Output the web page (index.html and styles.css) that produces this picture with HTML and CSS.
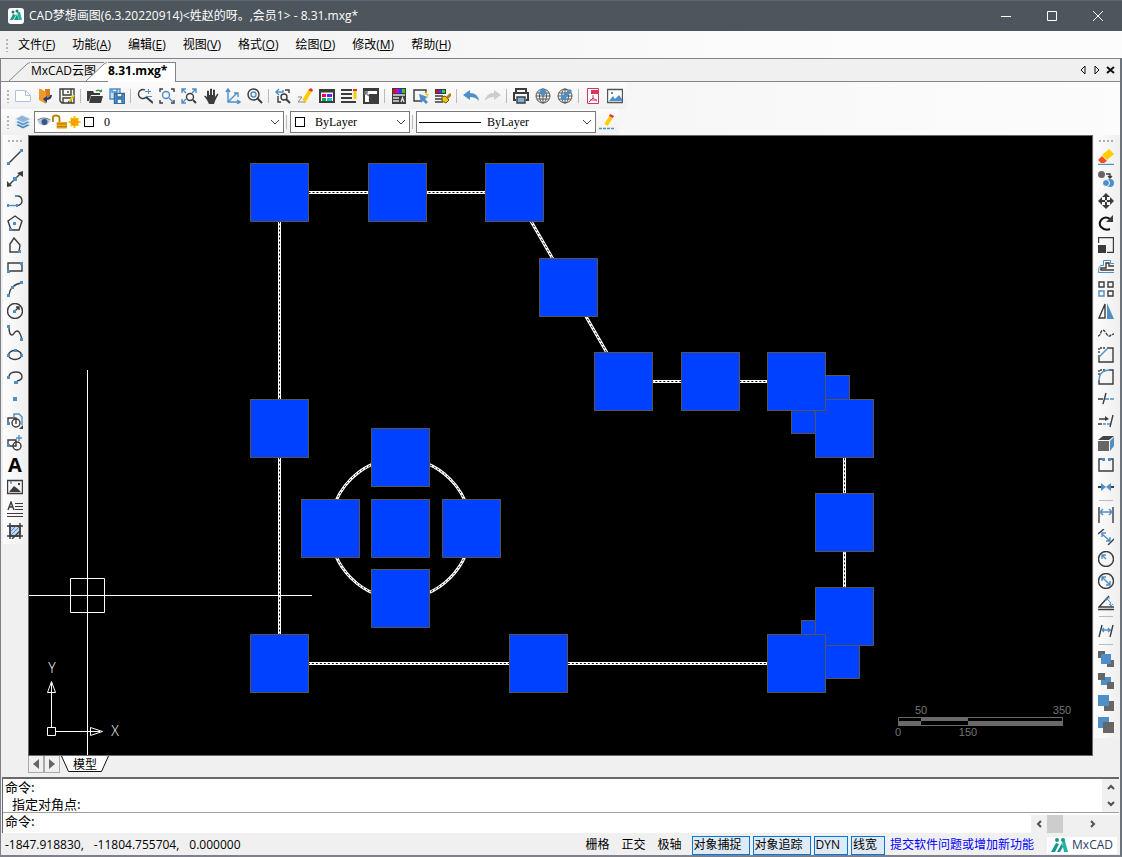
FILE: index.html
```html
<!DOCTYPE html>
<html lang="zh-CN">
<head>
<meta charset="UTF-8">
<meta name="viewport" content="width=device-width, initial-scale=1.0">
<title>CAD梦想画图</title>
<link rel="stylesheet" href="styles.css">
</head>
<body>
  <header class="titlebar">
    <svg class="app-logo" viewBox="0 0 16 16"><rect width="16" height="16" rx="3" fill="#fff"/><path d="M2 12 5 6l3 1-3 5zM6 12l3-6 2 6z" fill="#179a8c"/><path d="M9 4h3l2 8h-3z" fill="#1fb5a5"/><circle cx="5" cy="4" r="1.500" fill="#37706c"/><circle cx="9" cy="3" r="1.500" fill="#37706c"/></svg>
    <h1>CAD梦想画图(6.3.20220914)&lt;姓赵的呀。,会员1&gt; - 8.31.mxg*</h1>
    <div class="window-buttons">
      <button aria-label="最小化"><svg viewBox="0 0 12 12"><path d="M1 6.500h10"/></svg></button>
      <button aria-label="最大化"><svg viewBox="0 0 12 12"><path d="M1.500 1.500h9v9h-9z"/></svg></button>
      <button aria-label="关闭"><svg viewBox="0 0 12 12"><path d="M1 1l10 10M11 1 1 11"/></svg></button>
    </div>
  </header>

  <nav class="menubar">
    <span class="grip"></span>
    <button>文件(<u>F</u>)</button>
    <button>功能(<u>A</u>)</button>
    <button>编辑(<u>E</u>)</button>
    <button>视图(<u>V</u>)</button>
    <button>格式(<u>O</u>)</button>
    <button>绘图(<u>D</u>)</button>
    <button>修改(<u>M</u>)</button>
    <button>帮助(<u>H</u>)</button>
  </nav>

  <div class="frame">
    <div class="doc-tabs">
      <button class="doc-tab"><svg viewBox="0 0 22 19"><path d="M0 19 18 2q2-1.500 4-1.500V19z"/></svg><span>MxCAD云图</span></button>
      <button class="doc-tab active"><svg viewBox="0 0 22 19"><path d="M0 19 18 2q2-1.500 4-1.500V19z"/></svg><span>8.31.mxg*</span></button>
      <div class="tab-nav">
        <button aria-label="上一个"><svg viewBox="0 0 10 10"><path d="M7 1v8L3 5z"/></svg></button>
        <button aria-label="下一个"><svg viewBox="0 0 10 10"><path d="M3 1v8l4-4z"/></svg></button>
        <button aria-label="关闭文档"><svg viewBox="0 0 10 10"><path class="thick" d="M1 2l7 6M8 2 1 8"/></svg></button>
      </div>
    </div>

    <div class="toolbars">
      <div class="toolbar main-bar">
        <span class="grip"></span>
        <button class="tool" aria-label="新建"><svg viewBox="0 0 16 16"><path d="M.5 2.500h10l5 5v6H.5z" fill="#fff" stroke="#a9c6e0" stroke-width="1"/><path d="M10.500 2.500v5h5" stroke="#a9c6e0" stroke-width="1"/></svg></button>
        <button class="tool" aria-label="打开云图"><svg viewBox="0 0 16 16"><path d="M8 1h5v9l-5 3z" fill="#d97b16" stroke="none"/><path d="M2 1h2l5 3v12l-7-4z" fill="#f0982c" stroke="none"/><path d="M14 7q0 4-5 4" stroke="#1b3f7a" stroke-width="2"/><path d="M6 11l4-3v7z" fill="#1b3f7a" stroke="none"/></svg></button>
        <button class="tool" aria-label="保存"><svg viewBox="0 0 16 16"><path d="M1 1h14v14H3l-2-2zM4 1v6h8V1M4 15v-5h8v5M9 3v2"/><path d="M15 7l-5 7" stroke="#f5c400" stroke-width="2"/><path class="kf" d="M9 13l2 1-2 2z"/></svg></button>
        <span class="sep"></span>
        <button class="tool" aria-label="打开"><svg viewBox="0 0 16 16"><path class="kf" d="M0 3h6l1 2h6v2H4l-2 6H0zM4 8h12l-2 7H2z"/><path d="M9 3q3-2 5 1" stroke="#3a8b52"/><path d="M12 4h3V1z" fill="#3a8b52" stroke="none"/></svg></button>
        <button class="tool" aria-label="全部保存"><svg viewBox="0 0 16 16"><path class="bl" d="M1 1h10v10H1zM3 1v3h5V1" fill="#c9dff2"/><path d="M5.500 5.500h10v10h-10z" fill="#5b98ce" stroke="#2f6da4"/><path d="M8 6v3h5V6M8 15v-4h5v4" fill="#fff" stroke="#2f6da4"/></svg></button>
        <span class="sep"></span>
        <button class="tool" aria-label="实时缩放"><svg viewBox="0 0 16 16"><path d="M8 2a4.500 4.500 0 1 0 2 6"/><path class="heavy" d="M9 9l7 6"/><path class="bl thin" d="M8 3.500h6M11.500 1v5M9 8.500h6"/></svg></button>
        <button class="tool" aria-label="窗口缩放"><svg viewBox="0 0 16 16"><path d="M1 4V1h3M12 1h3v3M1 12v3h3M12 15h3v-3"/><circle class="bl" cx="7" cy="7" r="3.500"/><path class="bl" d="M10 10l4 4"/></svg></button>
        <button class="tool" aria-label="范围缩放"><svg viewBox="0 0 16 16"><path class="bl" d="M1 5V1h4M1 1l4 4M11 1h4v4M15 1l-4 4M1 11v4h4M1 15l4-4"/><circle cx="9" cy="9" r="3.500"/><path class="heavy" d="M12 12l3 3"/></svg></button>
        <button class="tool" aria-label="平移"><svg viewBox="0 0 16 16"><path class="kf" d="M4 9V3q1-1 2 0v4h1V1q1-1 2 0v6h1V2q1-1 2 0v7l2-3q2-1 1 1l-3 6-1 3H6l-2-4-3-4q1-1 3 1z"/></svg></button>
        <button class="tool" aria-label="坐标系"><svg viewBox="0 0 16 16"><path class="bl" d="M3 2v12h11M3 14 12 5M1 4l2-3 2 3M12 12l3 2-3 2M9 5h4v4"/></svg></button>
        <button class="tool" aria-label="缩放"><svg viewBox="0 0 16 16"><circle cx="6.500" cy="6.500" r="5.500"/><circle class="bl" cx="6.500" cy="6.500" r="2.500"/><path class="heavy" d="M10 10l5 5"/></svg></button>
        <span class="sep"></span>
        <button class="tool" aria-label="上一视图"><svg viewBox="0 0 16 16"><path class="bl" d="M4 1 1 4l3 3M1 4h7V2"/><path d="M10 2h4v3M3 8v6h3"/><circle cx="9" cy="9" r="3"/><path class="heavy" d="M11 11l4 4"/></svg></button>
        <button class="tool" aria-label="编辑"><svg viewBox="0 0 16 16"><path d="M1 9h4l-4 5h8" stroke="#888" stroke-width="1"/><path d="M13 3 7 13" stroke="#fc0" stroke-width="4"/><path d="M14 0l2 2-1 2-4-2z" fill="#d33" stroke="none"/></svg></button>
        <button class="tool" aria-label="特性"><svg viewBox="0 0 16 16"><path d="M1 2h14v12H1z" fill="#fff" stroke-width="2"/><path d="M1 3h14" stroke-width="3"/><path d="M3 6h4v3H3z" fill="#e06" stroke="none"/><path d="M8 6h5v3H8z" fill="#62f" stroke="none"/><path d="M3 10h4v3H3z" fill="#1a4" stroke="none"/><path d="M8 10h5v3H8z" fill="#2bb" stroke="none"/></svg></button>
        <button class="tool" aria-label="图层列表"><svg viewBox="0 0 16 16"><path d="M0 2h11M0 6h11M0 10h11M0 14h15" stroke-width="2"/><path d="M14 2v9" stroke="#fc0" stroke-width="3"/><path d="M12 1h4v2h-4z" fill="#d33" stroke="none"/></svg></button>
        <button class="tool" aria-label="图块"><svg viewBox="0 0 16 16"><path d="M1 1h14v14H1z" fill="#fff" stroke-width="2"/><path class="kf" d="M6 6h9v9H6zM1 1h14v2H1z"/><path d="M2 4l4 4M2 7V4h3" stroke="#777"/></svg></button>
        <span class="sep"></span>
        <button class="tool" aria-label="颜色"><svg viewBox="0 0 16 16"><path class="kf" d="M1 0h14v16H1z"/><path d="M2 1h3v4H2z" fill="#e02" stroke="none"/><path d="M5 1h3v4H5z" fill="#b0f" stroke="none"/><path d="M8 1h3v4H8z" fill="#24f" stroke="none"/><path d="M11 1h3v4h-3z" fill="#3c2" stroke="none"/><path d="M2 7h12M2 10h6M2 13h6M10 14l1.500-4 1.500 4" stroke="#ddd"/></svg></button>
        <button class="tool" aria-label="快速选择"><svg viewBox="0 0 16 16"><path d="M8 13H1V2h12v3"/><path class="bf" d="M6 6l9 3-3 2 3 3-2 2-3-3-2 2z"/><path d="M14 3l-2 4h2l-1 4 3-5h-2z" fill="#fc0" stroke="none"/></svg></button>
        <button class="tool" aria-label="格式刷"><svg viewBox="0 0 16 16"><path class="kf" d="M0 1h11v5H0z"/><path d="M1 2h3v3H1z" fill="#e02" stroke="none"/><path d="M4 2h3v3H4z" fill="#24f" stroke="none"/><path d="M7 2h3v3H7z" fill="#3c2" stroke="none"/><path d="M0 8h8M0 11h7M0 14h8"/><path d="M7 9l3-1 4 4-3 3-4-2z" fill="#f0c419" stroke="#6b5400" stroke-width="1"/><path d="M12 10l4-4" stroke="#a8830b" stroke-width="3"/></svg></button>
        <span class="sep"></span>
        <button class="tool" aria-label="撤销"><svg viewBox="0 0 16 16"><path class="bf" d="M0 7l7-5v3q8 0 9 8-3-4-9-4v3z"/></svg></button>
        <button class="tool" aria-label="重做"><svg viewBox="0 0 16 16"><path d="M16 7 9 2v3Q1 5 0 13q3-4 9-4v3z" fill="#ccc" stroke="none"/></svg></button>
        <span class="sep"></span>
        <button class="tool" aria-label="打印"><svg viewBox="0 0 16 16"><path d="M3 5V1h10v4M3 12H1V5h14v7h-2" stroke-width="2"/><path d="M4 9h8v6H4z" fill="#7fb0dc"/></svg></button>
        <button class="tool" aria-label="上传网络"><svg class="globe" viewBox="0 0 16 16"><circle cx="8" cy="8" r="7"/><path d="M1 8h14M8 1v14M2 5h12M2 11h12"/><ellipse cx="8" cy="8" rx="3.500" ry="7"/><path class="bf" d="M3 6l5-6 5 6h-3v1H6V6z"/></svg></button>
        <button class="tool" aria-label="下载网络"><svg class="globe" viewBox="0 0 16 16"><circle cx="8" cy="8" r="7"/><path d="M1 8h14M8 1v14M2 5h12M2 11h12"/><ellipse cx="8" cy="8" rx="3.500" ry="7"/><path class="bf" d="M4 12V5l2 2 7-6 2 2-6 7 2 2z"/></svg></button>
        <span class="sep"></span>
        <button class="tool" aria-label="输出PDF"><svg viewBox="0 0 16 16"><path d="M2.500.5h11v15h-11z" fill="#fff" stroke="#d8365d" stroke-width="1"/><path d="M6 2h8v4H6z" fill="#d8365d" stroke="none"/><path d="M8 7v3l-4 4M8 10l4 3M5 12h7" stroke="#d8365d" stroke-width="1"/></svg></button>
        <button class="tool" aria-label="输出图片"><svg viewBox="0 0 16 16"><path d="M.5 1.500h15v13H.5z" fill="#fff" stroke="#555"/><path class="bf" d="M2 13l4-5 2 3 4-4 3 4v2zM4 4h2v2H4z"/></svg></button>
      </div>

      <div class="toolbar">
        <span class="grip"></span>
        <button class="tool" aria-label="图层"><svg viewBox="0 0 16 16"><path d="M0 11l7-3 9 3-8 4z" fill="#4f86b8" stroke="#e8f0f8" stroke-width="1"/><path d="M0 8l7-3 9 3-8 4z" fill="#5f94c4" stroke="#e8f0f8" stroke-width="1"/><path d="M0 5l7-4 9 4-8 4z" fill="#8fb6d9" stroke="#e8f0f8" stroke-width="1"/></svg></button>
        <div class="combo layer-combo">
          <select aria-label="当前图层"><option>0</option></select>
          <span class="combo-art">
            <svg viewBox="0 0 14 16"><path d="M0 7q6-6 13 0-4 6-9 4Q1 10 0 7z" fill="#b9c9da" stroke="none"/><circle cx="7" cy="8" r="3" fill="#355a85" stroke="none"/><path d="M0 6q6-4 13 0" stroke="#6b7786" stroke-width="1"/></svg>
            <svg viewBox="0 0 16 16"><path d="M1 8V3q0-2 3-2 4 0 4 3v4" stroke="#b8860b" stroke-width="2"/><path d="M5 8h11v7H5z" fill="#e8ac1c" stroke="none"/><path d="M5 10h11M5 13h11" stroke="#a87408" stroke-width="1"/></svg>
            <svg viewBox="0 0 14 16"><path d="M7 2v12M1 8h12M3 4l8 8M11 4l-8 8" stroke="#ffc800" stroke-width="2"/><circle cx="7" cy="8" r="4" fill="#ffa000" stroke="none"/></svg>
            <i class="swatch"></i>
          </span>
          <svg class="chevron" viewBox="0 0 10 6"><path d="M1 1l4 4 4-4"/></svg>
        </div>
        <span class="sep"></span>
        <div class="combo color-combo">
          <select aria-label="颜色"><option>ByLayer</option></select>
          <span class="combo-art"><i class="swatch"></i></span>
          <svg class="chevron" viewBox="0 0 10 6"><path d="M1 1l4 4 4-4"/></svg>
        </div>
        <span class="sep"></span>
        <div class="combo line-combo">
          <select aria-label="线型"><option>ByLayer</option></select>
          <span class="combo-art"><i class="line-sample"></i></span>
          <svg class="chevron" viewBox="0 0 10 6"><path d="M1 1l4 4 4-4"/></svg>
        </div>
        <button class="tool" aria-label="线型管理"><svg viewBox="0 0 16 16"><path class="bl" d="M0 14.500h16" stroke-dasharray="3 1"/><path d="M12 3 7 11" stroke="#fc0" stroke-width="4"/><path d="M11 0l4 2-1 2-4-2z" fill="#d33" stroke="none"/></svg></button>
      </div>
    </div>

    <main class="workspace">
      <div class="side left">
        <span class="grip flat"></span>
        <button class="tool" aria-label="直线"><svg viewBox="0 0 16 16"><path d="M2 14 14 2"/><path class="bf" d="M0 13h3v3H0zM13 0h3v3h-3z"/></svg></button>
        <button class="tool" aria-label="构造线"><svg viewBox="0 0 16 16"><path d="M2 14 14 2"/><path class="kf" d="M16 0v6l-6-4zM0 16v-6l5 5z"/><path class="bf" d="M6 6h4v4H6z"/></svg></button>
        <button class="tool" aria-label="多段线"><svg viewBox="0 0 16 16"><path d="M10 3q5 0 5 5 0 4-5 4.500"/><path class="bl" d="M0 12.500h10"/><path class="bf" d="M8 2h3v2H8zM0 11h2v3H0zM9 11h2v3H9z"/></svg></button>
        <button class="tool" aria-label="正多边形"><svg viewBox="0 0 16 16"><path d="M8 1l7 5-3 9H4L1 6z"/><path class="bf" d="M6 7h3v3H6zM2 13h3v3H2z"/></svg></button>
        <button class="tool" aria-label="多边形"><svg viewBox="0 0 16 16"><path d="M7 1l6 7-1 7H3V7z"/><path class="bf" d="M11 13h3v3h-3z"/></svg></button>
        <button class="tool" aria-label="矩形"><svg viewBox="0 0 16 16"><path d="M1 4h14v8H1z"/><path class="bf" d="M13 3h3v3h-3zM0 11h3v3H0z"/></svg></button>
        <button class="tool" aria-label="圆弧"><svg viewBox="0 0 16 16"><path d="M2 14Q3 4 14 2"/><path class="bf" d="M0 13h3v3H0zM4 5h3v3H4zM13 0h3v3h-3z"/></svg></button>
        <button class="tool" aria-label="圆"><svg viewBox="0 0 16 16"><circle cx="8" cy="8" r="7.500"/><path d="M8 8l4-4M9 4h3v3"/><path class="bf" d="M6 7h3v3H6z"/></svg></button>
        <button class="tool" aria-label="样条曲线"><svg viewBox="0 0 16 16"><path d="M2 2q0 8 3 8c2 0 2-4 5-4s3 3 5 8"/><path class="bf" d="M0 0h3v3H0zM13 13h3v3h-3z"/></svg></button>
        <button class="tool" aria-label="椭圆"><svg viewBox="0 0 16 16"><ellipse cx="8" cy="8" rx="6.500" ry="4.500"/><path class="bf" d="M0 7h3v3H0zM13 7h3v3h-3zM7 2h3v3H7z"/></svg></button>
        <button class="tool" aria-label="椭圆弧"><svg viewBox="0 0 16 16"><path d="M2 7q1-4 7-4 6 0 6 5 0 3-5 4"/><path class="bf" d="M0 7h3v3H0zM7 12h4v3H7z"/></svg></button>
        <button class="tool" aria-label="点"><svg viewBox="0 0 16 16"><path class="bf" d="M6 6h4v4H6z"/></svg></button>
        <button class="tool" aria-label="插入块"><svg viewBox="0 0 16 16"><path class="bl" d="M7 4V1h5l3 3v8"/><path d="M1 10V5h8v6"/><circle cx="9" cy="10" r="4"/><path class="bf" d="M0 9h3v3H0z"/><path class="kf" d="M16 12v4h-4z"/></svg></button>
        <button class="tool" aria-label="创建块"><svg viewBox="0 0 16 16"><path class="bl" d="M12 0v6M9 3h6"/><path d="M1 10V5h8v6H3"/><circle cx="10" cy="11" r="4"/><path class="bf" d="M0 9h3v3H0z"/></svg></button>
        <button class="tool letter" aria-label="文字">A</button>
        <button class="tool" aria-label="图像"><svg viewBox="0 0 16 16"><path d="M.5 1.500h15v13H.5z"/><path class="kf" d="M2 13l5-6 4 3 3 3zM11 4h2v2h-2z"/><path class="bl" d="M4 2v3"/></svg></button>
        <button class="tool" aria-label="多行文字"><svg viewBox="0 0 16 16"><path d="M1 9l3-8 3 8M2 6h4"/><path class="thin" d="M8 2.500h8M8 5.500h8M8 8.500h8M0 12.500h16M0 15.500h16"/></svg></button>
        <button class="tool" aria-label="图案填充"><svg viewBox="0 0 16 16"><path d="M3 3h10v10H3z" fill="#bcd5ec"/><path class="bl thin" d="M3 9l6-6M3 13 13 3M8 13l5-5"/><path d="M3 0v16M13 0v16M0 3h16M0 13h16M5 16l8-8"/></svg></button>
      </div>

      <div class="view">
        <div class="canvas">
          <svg class="drawing" role="img" aria-label="图形">
            <!-- selected outline and circle -->
            <g class="outline">
              <path d="M250.500 527.500V56.500h235l109 189h173q48 0 48 47v188l-48 47z"/>
              <circle cx="371.500" cy="392.500" r="70"/>
            </g>
            <g class="outline dash">
              <path d="M250.500 527.500V56.500h235l109 189h173q48 0 48 47v188l-48 47z"/>
              <circle cx="371.500" cy="392.500" r="70"/>
            </g>
            <!-- grips -->
            <g class="grips">
              <rect x="221.500" y="27.500" width="58" height="58"/>
              <rect x="339.500" y="27.500" width="58" height="58"/>
              <rect x="456.500" y="27.500" width="58" height="58"/>
              <rect x="510.500" y="122.500" width="58" height="58"/>
              <rect x="565.500" y="216.500" width="58" height="58"/>
              <rect x="652.500" y="216.500" width="58" height="58"/>
              <rect x="762.500" y="239.500" width="58" height="58"/>
              <rect x="786.500" y="263.500" width="58" height="58"/>
              <rect x="738.500" y="216.500" width="58" height="58"/>
              <rect x="786.500" y="357.500" width="58" height="58"/>
              <rect x="772.500" y="484.500" width="58" height="58"/>
              <rect x="786.500" y="451.500" width="58" height="58"/>
              <rect x="738.500" y="498.500" width="58" height="58"/>
              <rect x="480.500" y="498.500" width="58" height="58"/>
              <rect x="221.500" y="498.500" width="58" height="58"/>
              <rect x="221.500" y="263.500" width="58" height="58"/>
              <rect x="342.500" y="292.500" width="58" height="58"/>
              <rect x="272.500" y="363.500" width="58" height="58"/>
              <rect x="342.500" y="363.500" width="58" height="58"/>
              <rect x="413.500" y="363.500" width="58" height="58"/>
              <rect x="342.500" y="433.500" width="58" height="58"/>
            </g>
            <!-- cursor -->
            <path class="cursor" d="M58.500 234v385M0 459.500h283M41.500 442.500h34v34h-34z"/>
          </svg>
          <svg class="ucs" viewBox="0 0 110 100">
            <path d="M18.500 72.500h8v8h-8zM22.500 72V38M27 76.500h35M22.500 26.500l-4 11h8zM22.500 28v9M73.500 76.500l-12-4v8zM62 76.500h9"/>
            <text x="23" y="18">Y</text><text x="86" y="81">X</text>
          </svg>
          <svg class="scale" viewBox="0 0 200 40">
            <path class="edge" d="M14.500 14.500h164v8h-164z"/>
            <path class="fill" d="M14 18h23v5H14zM37 14h47v4H37zM84 18h95v5H84z"/>
            <text x="37" y="11">50</text><text x="178" y="11">350</text>
            <text x="14" y="33">0</text><text x="84" y="33">150</text>
          </svg>
        </div>
        <div class="sheet-tabs">
          <button class="sheet-nav" aria-label="向左"><svg viewBox="0 0 8 10"><path d="M7 0v10L1 5z"/></svg></button>
          <button class="sheet-nav" aria-label="向右"><svg viewBox="0 0 8 10"><path d="M1 0v10l6-5z"/></svg></button>
          <button class="sheet-tab"><svg viewBox="0 0 48 16"><path d="M.5 0l7 15.500h33L47.500 0"/></svg><span>模型</span></button>
        </div>
      </div>

      <div class="side right">
        <span class="grip flat"></span>
        <button class="tool" aria-label="删除"><svg viewBox="0 0 16 16"><path d="M4 6l7-6 5 5-7 6z" fill="#fc0" stroke="none"/><path d="M4 7l5 5-3 2H3l-3-3z" fill="#f4511e" stroke="none"/><path class="bl" d="M0 15.500h16"/></svg></button>
        <button class="tool" aria-label="复制"><svg viewBox="0 0 16 16"><circle cx="3.500" cy="3.500" r="3.500" fill="#666" stroke="none"/><path d="M8 3h4v3M10 5l2 2 2-2"/><circle class="bf" cx="12" cy="12" r="4"/><circle cx="8" cy="12" r="3.500" fill="#4f8fc8" stroke="#fff" stroke-width="1"/></svg></button>
        <button class="tool" aria-label="移动"><svg viewBox="0 0 16 16"><path d="M8 2v12M2 8h12" stroke-width="2"/><path class="kf" d="M8 0l4 4H4zM8 16l4-4H4zM0 8l4-4v8zM16 8l-4-4v8z"/><path class="hole" d="M7 7h2v2H7z"/></svg></button>
        <button class="tool" aria-label="旋转"><svg viewBox="0 0 16 16"><path d="M12 4Q8 1 4 4q-4 4-1 8 4 4 9 2" stroke="#111" stroke-width="2"/><path class="kf" d="M15 0v7H8z"/></svg></button>
        <button class="tool" aria-label="缩放对象"><svg viewBox="0 0 16 16"><path d="M.5 6V.5h15v15H9"/><path class="kf" d="M0 8h8v8H0z"/></svg></button>
        <button class="tool" aria-label="偏移"><svg viewBox="0 0 16 16"><path class="bl thin" d="M16 4.500h-3.500v-3h-7v5h-3q-2 1-2 7h15.500"/><path d="M16 7h-5V4H8v5H3v2h13"/></svg></button>
        <button class="tool" aria-label="阵列"><svg viewBox="0 0 16 16"><path d="M1 1h5v5H1zM10 1h5v5h-5zM10 10h5v5h-5z"/><path class="bl" d="M1 10h5v5H1z"/></svg></button>
        <button class="tool" aria-label="镜像"><svg viewBox="0 0 16 16"><path d="M7 1v14H1z"/><path class="bf" d="M9 0v16h7z"/></svg></button>
        <button class="tool" aria-label="光顺曲线"><svg viewBox="0 0 16 16"><path d="M0 11q2 0 3-4 2-4 5 1 3 5 5 2l3-1" stroke-dasharray="3 1"/></svg></button>
        <button class="tool" aria-label="倒角"><svg viewBox="0 0 16 16"><path d="M9 1h6v14H1V8"/><path d="M1 6V1h6" stroke-dasharray="2 1"/><path class="bl" d="M1 10l9-9"/></svg></button>
        <button class="tool" aria-label="圆角"><svg viewBox="0 0 16 16"><path d="M11 1h4v14H1v-4"/><path d="M1 6V1h6" stroke-dasharray="2 1"/><path class="bl" d="M1 12Q1 1 12 1"/></svg></button>
        <button class="tool" aria-label="修剪"><svg viewBox="0 0 16 16"><path d="M0 8h5M5 13 8 2"/><path class="bl" d="M7 8h9" stroke-dasharray="4 1"/></svg></button>
        <button class="tool" aria-label="延伸"><svg viewBox="0 0 16 16"><path d="M1 6h8M0 11h4M12 14l3-12"/><path class="kf" d="M7 3l4 3-4 2z"/><path class="bl" d="M5 11h7" stroke-dasharray="3 1"/></svg></button>
        <button class="tool" aria-label="长方体"><svg viewBox="0 0 16 16"><path d="M0 5l5-4h11l-5 4z" fill="#444" stroke="none"/><path d="M0 6h11v10H0z" fill="#666" stroke="none"/><path class="bf" d="M12 6l4-4v9l-4 5z"/></svg></button>
        <button class="tool" aria-label="打断"><svg viewBox="0 0 16 16"><path d="M4 2H1v12h14V2h-3"/><path class="bf" d="M4 1h3v3H4zM10 1h3v3h-3z"/></svg></button>
        <button class="tool" aria-label="合并"><svg viewBox="0 0 16 16"><path d="M0 8h4M12 8h4" stroke-width="2"/><path class="bf" d="M3 4l5 4-5 4zM13 4 8 8l5 4z"/></svg></button>
        <span class="sep"></span>
        <button class="tool" aria-label="线性标注"><svg viewBox="0 0 16 16"><path d="M1 0v16M15 0v16"/><path class="bl" d="M3 5h10M5 2 2 5l3 3M11 2l3 3-3 3"/></svg></button>
        <button class="tool" aria-label="对齐标注"><svg viewBox="0 0 16 16"><path d="M0 5l6-5M10 16l6-6"/><path class="bl" d="M4 5l8 7M4 8V4h4M8 12h4V8"/></svg></button>
        <button class="tool" aria-label="半径标注"><svg viewBox="0 0 16 16"><circle cx="8" cy="8" r="7.500"/><path class="bl" d="M4 4l4 4M4 8V4h4"/></svg></button>
        <button class="tool" aria-label="直径标注"><svg viewBox="0 0 16 16"><circle cx="8" cy="8" r="7.500"/><path class="bl" d="M4 4l8 8M4 8V4h4M8 12h4V8"/></svg></button>
        <button class="tool" aria-label="角度标注"><svg viewBox="0 0 16 16"><path d="M11 1 1 12h15M0 14.500h16"/><path class="bl thin" d="M9 4q4 2 4 7M8 6V3h4M11 9l2 2 2-2"/></svg></button>
        <span class="sep"></span>
        <button class="tool" aria-label="编辑标注"><svg viewBox="0 0 16 16"><path d="M1 14 4 2M12 14l3-12"/><path class="bl" d="M4 7h9M6 5 4 7l2 2M10 5l2 2-2 2"/></svg></button>
        <span class="sep"></span>
        <button class="tool" aria-label="前置"><svg viewBox="0 0 16 16"><path class="gf" d="M0 0h7v7H0zM9 9h7v7H9z"/><path class="bf" d="M3 3h10v10H3z"/></svg></button>
        <button class="tool" aria-label="后置"><svg viewBox="0 0 16 16"><path class="bf" d="M3 4h10v8H3z"/><path class="gf" d="M0 0h7v7H0zM9 9h7v7H9z"/></svg></button>
        <button class="tool" aria-label="置于对象之上"><svg viewBox="0 0 16 16"><path class="gf" d="M6 6h10v10H6z"/><path class="bf" d="M0 0h11v11H0z"/></svg></button>
        <button class="tool" aria-label="置于对象之下"><svg viewBox="0 0 16 16"><path class="bf" d="M0 0h11v11H0z"/><path class="gf" d="M5 5h11v11H5z"/></svg></button>
      </div>
    </main>

    <section class="command">
      <div class="history">
        <div class="log"><p>命令:</p><p class="indent">指定对角点:</p></div>
        <div class="vscroll">
          <button aria-label="向上滚动"><svg viewBox="0 0 8 6"><path d="M1 5l3-3 3 3"/></svg></button>
          <button aria-label="向下滚动"><svg viewBox="0 0 8 6"><path d="M1 1l3 3 3-3"/></svg></button>
        </div>
      </div>
      <div class="prompt">
        <label for="cmd">命令:</label>
        <input type="text" id="cmd">
        <div class="hscroll">
          <button aria-label="向左滚动"><svg viewBox="0 0 6 8"><path d="M5 1 2 4l3 3"/></svg></button>
          <span class="thumb"></span>
          <button aria-label="向右滚动"><svg viewBox="0 0 6 8"><path d="M1 1l3 3-3 3"/></svg></button>
        </div>
      </div>
    </section>

    <footer class="status">
      <div class="coords"><span>-1847.918830,</span><span>-11804.755704,</span><span>0.000000</span></div>
      <button class="mode">栅格</button>
      <button class="mode">正交</button>
      <button class="mode">极轴</button>
      <button class="mode on">对象捕捉</button>
      <button class="mode on">对象追踪</button>
      <button class="mode on">DYN</button>
      <button class="mode on">线宽</button>
      <a href="#">提交软件问题或增加新功能</a>
      <div class="brand"><svg viewBox="0 0 18 14"><path d="M0 14 5 5l3 1-4 8zM6 14l5-9 1 4-3 5z" fill="#14988b"/><path d="M11 3h3l3 11h-4z" fill="#1fb5a5"/><circle cx="6" cy="2" r="2" fill="#14988b"/><circle cx="12" cy="2" r="2" fill="#14988b"/></svg><span>MxCAD</span></div>
    </footer>
  </div>
</body>
</html>
```
FILE: styles.css
```css
* {
  box-sizing: border-box;
}
body {
  margin: 0;
  min-height: 100vh;
  display: flex;
  flex-direction: column;
  background: #f0f0f0;
  color: #000;
  font: 12px/16px "Open Sans", "Noto Sans CJK SC", sans-serif;
}
button {
  font: inherit;
  color: inherit;
  background: none;
  border: none;
  padding: 0;
  margin: 0;
}
svg {
  display: block;
  flex: none;
}

/* title bar */
.titlebar {
  height: 31px;
  display: flex;
  align-items: center;
  background: #4d565c;
  border-top: 1px solid #5d666c;
  color: #fff;
  padding: 0 1px 0 8px;
}
.titlebar h1 {
  margin: 0 0 0 5px;
  flex: 1;
  font-size: 12px;
  font-weight: normal;
}
.app-logo {
  width: 16px;
  height: 16px;
}
.window-buttons {
  display: flex;
}
.window-buttons button {
  width: 46px;
  height: 30px;
  display: flex;
  align-items: center;
  justify-content: center;
}
.window-buttons svg {
  width: 12px;
  height: 12px;
  fill: none;
  stroke: #fff;
}

/* menu */
.menubar {
  height: 27px;
  display: flex;
  align-items: center;
  background: linear-gradient(90deg, #f0f0f0, #fcfcfc 75%);
}
.menubar button {
  padding: 0 9px 0 8px;
}
.grip {
  width: 10px;
  height: 14px;
  background: radial-gradient(circle, #b5b5b5 1px, transparent 1px) 5px 0 / 4px 4px repeat-y;
}
.grip.flat {
  width: 16px;
  height: 4px;
  margin: 4px 0 3px;
  background: radial-gradient(circle, #b0b0b0 1px, transparent 1px) 0 0 / 4px 4px repeat-x;
}

.frame {
  flex: 1;
  display: flex;
  flex-direction: column;
  border: solid #80808c;
  border-width: 1px 1px 2px;
  border-right: 2px solid #6b737b;
}

/* document tabs */
.doc-tabs {
  height: 23px;
  display: flex;
  align-items: flex-end;
  padding-left: 8px;
  border-bottom: 1px solid #858585;
}
.doc-tab {
  display: flex;
  height: 19px;
}
.doc-tab svg {
  width: 22px;
  height: 19px;
}
.doc-tab path {
  fill: #f0f0f0;
  stroke: #858585;
  stroke-dasharray: 28 60;
}
.doc-tab span {
  border-top: 1px solid #858585;
  padding-right: 8px;
}
.doc-tab.active {
  position: relative;
  margin-left: -18px;
  margin-bottom: -1px;
  height: 20px;
  font-weight: bold;
}
.doc-tab.active path {
  fill: #fff;
}
.doc-tab.active span {
  background: #fff;
  height: 20px;
  border-right: 1px solid #858585;
}
.tab-nav {
  margin-left: auto;
  align-self: center;
  display: flex;
  gap: 4px;
  padding-right: 4px;
}
.tab-nav svg {
  width: 10px;
  height: 10px;
  fill: none;
  stroke: #111;
}
.tab-nav .thick {
  stroke-width: 2;
}

/* toolbars */
.toolbars {
  display: flex;
  flex-direction: column;
  align-items: flex-start;
  background: linear-gradient(90deg, #f0f0f0, #fcfcfc);
}
.toolbar {
  height: 26px;
  display: flex;
  align-items: center;
  background: linear-gradient(#fcfcfc, #f0f0f0);
  border-radius: 0 4px 4px 0;
  padding-right: 1px;
}
.toolbar .grip {
  margin-right: 1px;
}
.main-bar {
  height: 27px;
  padding-top: 1px;
}
.tool {
  width: 22px;
  height: 22px;
  display: flex;
  align-items: center;
  justify-content: center;
  flex: none;
}
.tool svg,
.combo-art svg {
  height: 16px;
  fill: none;
  stroke: #3c3c3c;
  stroke-width: 1.4;
}
.tool svg {
  width: 16px;
}
.tool .globe,
.tool .thin {
  stroke-width: 1;
}
.tool .globe {
  stroke: #555;
}
.tool .heavy {
  stroke-width: 2;
}
.tool .bl {
  stroke: #4f8fc8;
}
.tool .bf {
  fill: #4f8fc8;
  stroke: none;
}
.tool .kf {
  fill: #3c3c3c;
  stroke: none;
}
.tool .gf {
  fill: #666;
  stroke: none;
}
.tool .hole {
  fill: #ddd;
  stroke: none;
}
.letter {
  font: bold 20px/22px "Open Sans", sans-serif;
}
.sep {
  width: 6px;
  height: 14px;
  background: linear-gradient(#bbb, #bbb) 2px 0 / 1px 100% no-repeat;
}

.combo {
  position: relative;
  height: 22px;
}
.combo select {
  appearance: none;
  width: 100%;
  height: 100%;
  border: 1px solid #7a7a7a;
  border-radius: 0;
  background: #fff;
  color: #000;
  font: 12px/18px "Liberation Serif", serif;
}
.layer-combo {
  width: 250px;
}
.layer-combo select {
  padding-left: 69px;
}
.color-combo {
  width: 120px;
}
.color-combo select {
  padding-left: 24px;
}
.line-combo {
  width: 180px;
}
.line-combo select {
  padding-left: 70px;
}
.combo-art {
  position: absolute;
  left: 3px;
  top: 3px;
  height: 16px;
  display: flex;
  align-items: center;
  pointer-events: none;
}
.combo-art svg {
  width: 15px;
}
.swatch {
  width: 10px;
  height: 10px;
  margin-left: 2px;
  border: 1px solid #000;
}
.line-sample {
  width: 62px;
  border-top: 1px solid #000;
}
.chevron {
  position: absolute;
  right: 4px;
  top: 8px;
  width: 10px;
  height: 6px;
  fill: none;
  stroke: #444;
  pointer-events: none;
}

/* workspace */
.workspace {
  flex: 1;
  display: flex;
}
.side {
  display: flex;
  flex-direction: column;
  align-items: center;
  align-self: flex-start;
  width: 24px;
  background: linear-gradient(90deg, #fdfdfd, #f0f0f0);
  padding-bottom: 2px;
}
.side.left {
  margin: 0 1px 0 2px;
}
.side.right {
  margin: 0 2px 0 1px;
}
.side .sep {
  width: 14px;
  height: 6px;
  background: linear-gradient(#bbb, #bbb) 0 2px / 100% 1px no-repeat;
}
.view {
  flex: 1;
  display: flex;
  flex-direction: column;
}
.canvas {
  flex: 1;
  position: relative;
  background: #000;
  border: 1px solid #696969;
  overflow: hidden;
}
.drawing {
  position: absolute;
  left: 0;
  top: 0;
  width: 100%;
  height: 100%;
}
.outline {
  fill: none;
  stroke: #fff;
  stroke-width: 3;
}
.outline.dash {
  stroke: #000;
  stroke-width: 1;
  stroke-dasharray: 2 2;
}
.grips rect {
  fill: #0040ff;
  stroke: #555;
}
.cursor {
  fill: none;
  stroke: #fff;
}
.ucs {
  position: absolute;
  left: 0;
  bottom: 0;
  width: 110px;
  height: 100px;
  fill: none;
  stroke: #fff;
}
.ucs text {
  fill: #fff;
  stroke: none;
  font: 300 14px "Open Sans", sans-serif;
  text-anchor: middle;
}
.scale {
  position: absolute;
  right: 8px;
  bottom: 12px;
  width: 200px;
  height: 40px;
}
.scale .edge {
  fill: none;
  stroke: #696969;
}
.scale .fill {
  fill: #696969;
}
.scale text {
  fill: #757575;
  font: 11px "Liberation Sans", sans-serif;
  text-anchor: middle;
}

.sheet-tabs {
  height: 18px;
  display: flex;
}
.sheet-nav {
  width: 16px;
  height: 17px;
  display: flex;
  align-items: center;
  justify-content: center;
  border: 1px solid #aaa;
  border-top: none;
}
.sheet-nav svg {
  width: 8px;
  height: 10px;
  fill: #666;
}
.sheet-tab {
  position: relative;
  width: 48px;
  height: 17px;
  margin-left: 1px;
}
.sheet-tab svg {
  position: absolute;
  left: 0;
  top: 0;
  width: 48px;
  height: 16px;
  fill: #fff;
  stroke: #111;
}
.sheet-tab span {
  position: relative;
}

/* command line */
.command {
  margin: 3px 1px 0;
  border: solid #696969;
  border-width: 2px 0 0 1px;
  background: #fff;
  font: 13px/17px "Noto Sans CJK SC", sans-serif;
}
.history {
  height: 34px;
  display: flex;
  border-bottom: 1px solid #a0a0a0;
}
.log {
  flex: 1;
  padding-left: 2px;
}
.log p {
  margin: 0;
  line-height: 15px;
}
.log .indent {
  padding-left: 7px;
  line-height: 19px;
}
.vscroll,
.hscroll {
  display: flex;
  background: #f0f0f0;
}
.vscroll {
  flex-direction: column;
  width: 17px;
}
.vscroll button,
.hscroll button {
  flex: 1;
  display: flex;
  align-items: center;
  justify-content: center;
}
.vscroll svg {
  width: 8px;
  height: 6px;
}
.hscroll svg {
  width: 6px;
  height: 8px;
}
.vscroll svg,
.hscroll svg {
  fill: none;
  stroke: #505050;
  stroke-width: 2;
}
.prompt {
  height: 20px;
  display: flex;
  padding-left: 2px;
  line-height: 15px;
}
.prompt input {
  flex: 1;
  border: none;
  outline: none;
  font: inherit;
  padding: 0 4px;
}
.hscroll {
  width: 88px;
  padding-right: 18px;
  margin-top: 2px;
}
.hscroll .thumb {
  width: 16px;
  background: #cdcdcd;
}
.hscroll button {
  flex: 0 0 16px;
}
.hscroll button:last-child {
  margin-left: auto;
}

/* status bar */
.status {
  height: 22px;
  display: flex;
  align-items: center;
  gap: 3px;
  padding: 2px 3px 0 4px;
}
.coords {
  flex: 1;
  display: flex;
  gap: 10px;
}
.mode {
  height: 19px;
  padding: 0 6px 0 1px;
  border: 1px solid transparent;
}
.mode.on {
  padding-right: 7px;
  border-color: #0078d7;
  background: #deeaf5;
}
.status a {
  color: #00f;
  text-decoration: none;
  margin: 0 10px 0 2px;
}
.brand {
  height: 17px;
  display: flex;
  align-items: center;
  gap: 3px;
  background: #fff;
  padding: 0 4px;
  color: #2c3e66;
}
.brand svg {
  width: 18px;
  height: 14px;
}
```
